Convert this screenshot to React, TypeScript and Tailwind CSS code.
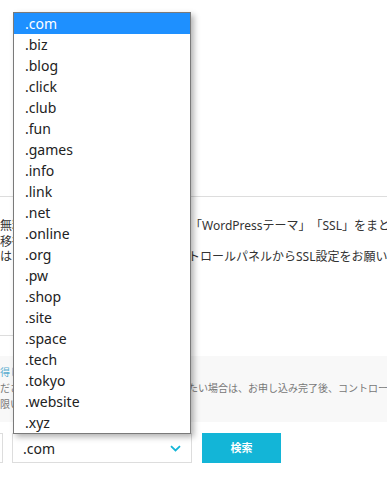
import React from "react";

const TLDS = [
  ".com", ".biz", ".blog", ".click", ".club", ".fun", ".games", ".info", ".link", ".net",
  ".online", ".org", ".pw", ".shop", ".site", ".space", ".tech", ".tokyo", ".website", ".xyz",
];

const jp = "font-['Noto_Sans','Noto_Sans_CJK_JP',sans-serif] [text-spacing-trim:space-all]";

function Chevron() {
  return (
    <svg width="11" height="7" viewBox="0 0 11 7" fill="none">
      <path d="M1 1.2 L5.5 5.5 L10 1.2" stroke="#13b5d7" strokeWidth="1.8" />
    </svg>
  );
}

function TldMenu() {
  return (
    <ul className="absolute left-[13px] top-[12px] w-[178px] border border-[#7a7a7a] bg-white shadow-[3px_3px_6px_rgba(0,0,0,0.3)]">
      {TLDS.map((t, i) => (
        <li
          key={t}
          className={
            i === 0
              ? "flex h-[21px] items-center bg-[#1e90ff] pl-[11px] text-[14px] text-white"
              : "flex h-[21px] items-center pl-[11px] text-[14px] text-[#222]"
          }
        >
          {t}
        </li>
      ))}
    </ul>
  );
}

export default function App() {
  return (
    <div className={`relative h-[487px] w-[387px] overflow-hidden bg-white ${jp}`}>
      <div className="h-[197px] border-b border-[#ddd]" />

      <div className="h-[138px] whitespace-nowrap pt-[21px] text-[12px] leading-[15.5px] text-[#333]">
        <p>
          <span className="inline-block w-[190px] overflow-hidden align-top">無料オプションの設定について、</span>
          「WordPressテーマ」「SSL」をまとめてお申し込みいただけます。
        </p>
        <p>移行サービスは別途お手続き</p>
        <p>
          <span className="inline-block w-[188px] overflow-hidden align-top">はじめての方は申込完了後にコン</span>
          トロールパネルからSSL設定をお願いします。
        </p>
      </div>

      <div className="h-[21px] w-[13px] border-t border-[#ddd]" />

      <div className="h-[66px] whitespace-nowrap bg-[#f8f8f8] pt-[8px] text-[10px] leading-[16px] text-[#777]">
        <p className="text-[#5aaed0]">得しおすすめ</p>
        <p>
          <span className="inline-block w-[188px] overflow-hidden align-top">ださいSSL設定を変更し</span>
          たい場合は、お申し込み完了後、コントロールパネルより設定してください。
        </p>
        <p>限いたします。</p>
      </div>

      <div className="mt-[11px] flex items-start">
        <div className="h-[30px] w-[3px] border border-l-0 border-[#ddd]" />
        <div className="ml-[9px] flex h-[30px] w-[180px] items-center justify-between border border-[#ddd] pl-[10px] pr-[10px] text-[14px] text-[#222]">
          <span>.com</span>
          <Chevron />
        </div>
        <button className="ml-[10px] flex h-[30px] w-[79px] items-center justify-center bg-[#13b5d7] text-[11px] font-bold text-white">
          検索
        </button>
      </div>

      <TldMenu />
    </div>
  );
}
